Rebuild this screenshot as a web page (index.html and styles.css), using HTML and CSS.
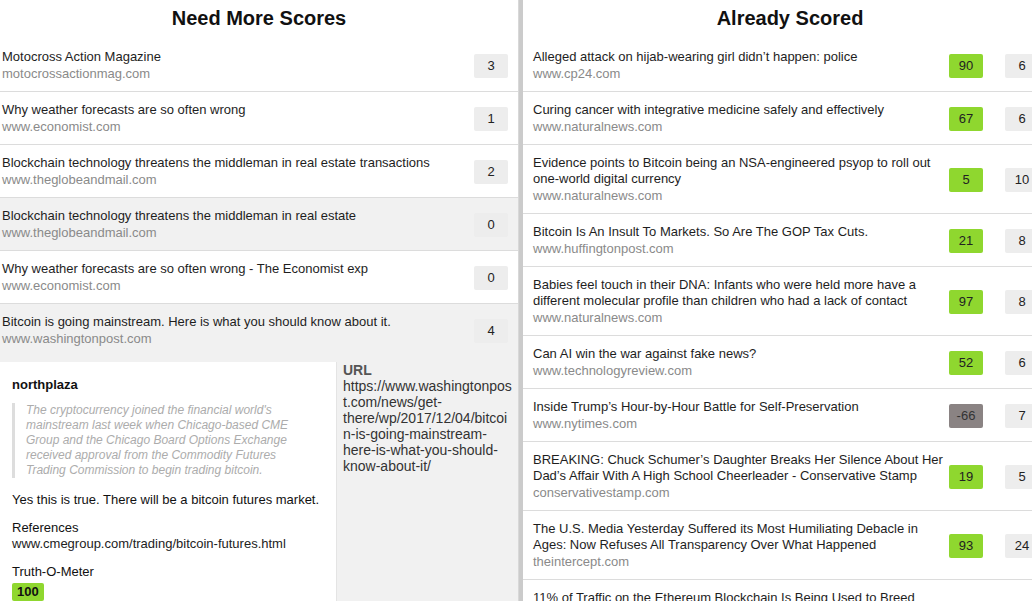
FILE: index.html
```html
<!DOCTYPE html>
<html>
<head>
<meta charset="utf-8">
<title>Scores</title>
<link rel="stylesheet" href="styles.css">
</head>
<body>
<div class="app">
  <section class="pane pane-left">
    <h2 class="pane-title">Need More Scores</h2>
    <ul class="list">
      <li class="item">
        <div class="row">
          <div class="info"><div class="title">Motocross Action Magazine</div><div class="domain">motocrossactionmag.com</div></div>
          <span class="count">3</span>
        </div>
      </li>
      <li class="item">
        <div class="row">
          <div class="info"><div class="title">Why weather forecasts are so often wrong</div><div class="domain">www.economist.com</div></div>
          <span class="count">1</span>
        </div>
      </li>
      <li class="item">
        <div class="row">
          <div class="info"><div class="title">Blockchain technology threatens the middleman in real estate transactions</div><div class="domain">www.theglobeandmail.com</div></div>
          <span class="count">2</span>
        </div>
      </li>
      <li class="item shaded">
        <div class="row">
          <div class="info"><div class="title">Blockchain technology threatens the middleman in real estate</div><div class="domain">www.theglobeandmail.com</div></div>
          <span class="count">0</span>
        </div>
      </li>
      <li class="item">
        <div class="row">
          <div class="info"><div class="title">Why weather forecasts are so often wrong - The Economist exp</div><div class="domain">www.economist.com</div></div>
          <span class="count">0</span>
        </div>
      </li>
      <li class="item shaded selected">
        <div class="row">
          <div class="info"><div class="title">Bitcoin is going mainstream. Here is what you should know about it.</div><div class="domain">www.washingtonpost.com</div></div>
          <span class="count">4</span>
        </div>
        <div class="detail">
          <div class="card">
            <div class="user">northplaza</div>
            <blockquote class="quote">The cryptocurrency joined the financial world's mainstream last week when Chicago-based CME Group and the Chicago Board Options Exchange received approval from the Commodity Futures Trading Commission to begin trading bitcoin.</blockquote>
            <p class="comment">Yes this is true. There will be a bitcoin futures market.</p>
            <div class="field">
              <div class="label">References</div>
              <div>www.cmegroup.com/trading/bitcoin-futures.html</div>
            </div>
            <div class="field">
              <div class="label">Truth-O-Meter</div>
              <span class="meter">100</span>
            </div>
          </div>
          <div class="url">
            <div class="url-label">URL</div>
            <div class="url-text">https://www.washingtonpost.com/news/get-there/wp/2017/12/04/bitcoin-is-going-mainstream-here-is-what-you-should-know-about-it/</div>
          </div>
        </div>
      </li>
    </ul>
  </section>
  <div class="divider"></div>
  <section class="pane pane-right">
    <h2 class="pane-title">Already Scored</h2>
    <ul class="list">
      <li class="item"><div class="row">
        <div class="info"><div class="title">Alleged attack on hijab-wearing girl didn’t happen: police</div><div class="domain">www.cp24.com</div></div>
        <span class="score">90</span><span class="count">6</span>
      </div></li>
      <li class="item"><div class="row">
        <div class="info"><div class="title">Curing cancer with integrative medicine safely and effectively</div><div class="domain">www.naturalnews.com</div></div>
        <span class="score">67</span><span class="count">6</span>
      </div></li>
      <li class="item"><div class="row">
        <div class="info"><div class="title">Evidence points to Bitcoin being an NSA-engineered psyop to roll out one-world digital currency</div><div class="domain">www.naturalnews.com</div></div>
        <span class="score">5</span><span class="count">10</span>
      </div></li>
      <li class="item"><div class="row">
        <div class="info"><div class="title">Bitcoin Is An Insult To Markets. So Are The GOP Tax Cuts.</div><div class="domain">www.huffingtonpost.com</div></div>
        <span class="score">21</span><span class="count">8</span>
      </div></li>
      <li class="item"><div class="row">
        <div class="info"><div class="title">Babies feel touch in their DNA: Infants who were held more have a different molecular profile than children who had a lack of contact</div><div class="domain">www.naturalnews.com</div></div>
        <span class="score">97</span><span class="count">8</span>
      </div></li>
      <li class="item"><div class="row">
        <div class="info"><div class="title">Can AI win the war against fake news?</div><div class="domain">www.technologyreview.com</div></div>
        <span class="score">52</span><span class="count">6</span>
      </div></li>
      <li class="item"><div class="row">
        <div class="info"><div class="title">Inside Trump’s Hour-by-Hour Battle for Self-Preservation</div><div class="domain">www.nytimes.com</div></div>
        <span class="score negative">-66</span><span class="count">7</span>
      </div></li>
      <li class="item"><div class="row">
        <div class="info"><div class="title">BREAKING: Chuck Schumer’s Daughter Breaks Her Silence About Her Dad’s Affair With A High School Cheerleader - Conservative Stamp</div><div class="domain">conservativestamp.com</div></div>
        <span class="score">19</span><span class="count">5</span>
      </div></li>
      <li class="item"><div class="row">
        <div class="info"><div class="title">The U.S. Media Yesterday Suffered its Most Humiliating Debacle in Ages: Now Refuses All Transparency Over What Happened</div><div class="domain">theintercept.com</div></div>
        <span class="score">93</span><span class="count">24</span>
      </div></li>
      <li class="item"><div class="row">
        <div class="info"><div class="title">11% of Traffic on the Ethereum Blockchain Is Being Used to Breed Digital Cats</div><div class="domain">www.coindesk.com</div></div>
        <span class="score">88</span><span class="count">9</span>
      </div></li>
    </ul>
  </section>
</div>
</body>
</html>
```

FILE: styles.css
```css
* { box-sizing: border-box; }

html, body {
  margin: 0;
  padding: 0;
  height: 601px;
  overflow: hidden;
  background: #fff;
}

body {
  font-family: "Liberation Sans", Arial, Helvetica, sans-serif;
  font-size: 13px;
  line-height: 16px;
  color: #1e1e1e;
}

.app {
  display: flex;
  width: max-content;
  align-items: stretch;
  min-height: 601px;
}

.pane-left { width: 518px; flex-shrink: 0; }
.pane-right { width: 534px; flex-shrink: 0; }

.divider {
  width: 5px;
  flex-shrink: 0;
  background: #cbcbcb;
  border-left: 1px solid #d8d8d8;
}

.pane-title {
  margin: 0;
  height: 39px;
  padding-top: 6px;
  font-size: 20px;
  line-height: 24px;
  font-weight: bold;
  text-align: center;
  color: #111;
}

.list {
  list-style: none;
  margin: 0;
  padding: 0;
}

.item {
  border-bottom: 1px solid #dcdcdc;
}

.item.shaded { background: #f1f1f1; }
.item.selected { border-bottom: none; }

.row {
  display: flex;
  align-items: center;
  padding: 10px 10px 9px 2px;
}

.pane-right .row { padding: 10px 18px 9px 10px; }

.info { flex: 1; min-width: 0; }

.title { color: #1e1e1e; }
.domain { color: #8a8a8a; margin-top: 1px; }

.count,
.score {
  flex-shrink: 0;
  width: 34px;
  height: 24px;
  line-height: 24px;
  text-align: center;
  border-radius: 2px;
  color: #222;
}

.count { background: #ededed; }

.score {
  background: #8fd72f;
  margin-left: 6px;
}

.score.negative { background: #8a8383; color: #333; }

.pane-right .count { margin-left: 22px; }

.detail {
  display: grid;
  grid-template-columns: 337px 1fr;
  column-gap: 6px;
  margin-top: 6px;
}

.card {
  background: #fff;
  padding: 15px 12px 20px 12px;
  border-right: 1px solid #e4e4e4;
}

.user { font-weight: bold; color: #111; }

.quote {
  margin: 10px 8px 0 0;
  padding-left: 11px;
  border-left: 3px solid #dddddd;
  font-size: 12px;
  line-height: 15px;
  font-style: italic;
  color: #acacac;
}

.comment {
  margin: 14px 0 0 0;
  color: #111;
}

.field { margin-top: 12px; color: #222; }
.label { color: #111; }

.meter {
  display: inline-block;
  margin-top: 3px;
  padding: 1px 5px;
  background: #8fd72f;
  border-radius: 2px;
  font-weight: bold;
  color: #111;
}

.url { padding-right: 6px; }

.url-label {
  font-size: 14px;
  font-weight: bold;
  color: #555;
}

.url-text {
  font-size: 14px;
  line-height: 16px;
  color: #333;
  overflow-wrap: anywhere;
}
```
